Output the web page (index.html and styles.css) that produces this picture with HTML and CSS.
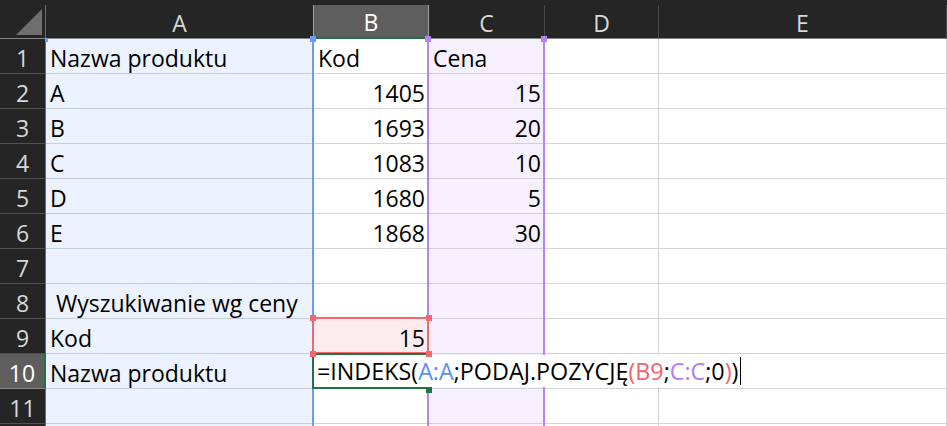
FILE: index.html
```html
<!DOCTYPE html>
<html lang="pl">
<head>
<meta charset="utf-8">
<title>Arkusz</title>
<link rel="stylesheet" href="styles.css">
</head>
<body>
<div class="topstrip"></div>
<div class="wrap">
  <div class="sheet">
    <div class="hd corner"><svg class="tri" width="46" height="33" viewBox="0 0 46 33"><polygon points="16,30 42,30 42,4" fill="#6f6f6f"/></svg></div>
    <div class="hd">A</div>
    <div class="hd sel-col">B</div>
    <div class="hd">C</div>
    <div class="hd">D</div>
    <div class="hd">E</div>

    <div class="rh">1</div><div class="c ca">Nazwa produktu</div><div class="c">Kod</div><div class="c cc">Cena</div><div class="c"></div><div class="c"></div>
    <div class="rh">2</div><div class="c ca">A</div><div class="c num">1405</div><div class="c cc num">15</div><div class="c"></div><div class="c"></div>
    <div class="rh">3</div><div class="c ca">B</div><div class="c num">1693</div><div class="c cc num">20</div><div class="c"></div><div class="c"></div>
    <div class="rh">4</div><div class="c ca">C</div><div class="c num">1083</div><div class="c cc num">10</div><div class="c"></div><div class="c"></div>
    <div class="rh">5</div><div class="c ca">D</div><div class="c num">1680</div><div class="c cc num">5</div><div class="c"></div><div class="c"></div>
    <div class="rh">6</div><div class="c ca">E</div><div class="c num">1868</div><div class="c cc num">30</div><div class="c"></div><div class="c"></div>
    <div class="rh">7</div><div class="c ca"></div><div class="c"></div><div class="c cc"></div><div class="c"></div><div class="c"></div>
    <div class="rh">8</div><div class="c ca"> Wyszukiwanie wg ceny</div><div class="c"></div><div class="c cc"></div><div class="c"></div><div class="c"></div>
    <div class="rh">9</div><div class="c ca">Kod</div><div class="c num cb">15</div><div class="c cc"></div><div class="c"></div><div class="c"></div>
    <div class="rh sel-row">10</div><div class="c ca">Nazwa produktu</div><div class="c"></div><div class="c cc"></div><div class="c"></div><div class="c"></div>
    <div class="rh">11</div><div class="c ca"></div><div class="c"></div><div class="c cc"></div><div class="c"></div><div class="c"></div>
    <div class="rh"></div><div class="c ca"></div><div class="c"></div><div class="c cc"></div><div class="c"></div><div class="c"></div>
  </div>

  <div class="rng rng-blue-line"></div>
  <div class="hnd hnd-blue-l"></div>
  <div class="hnd hnd-blue-r"></div>
  <div class="rng rng-purple-l"></div>
  <div class="rng rng-purple-r"></div>
  <div class="hnd hnd-purple-l"></div>
  <div class="hnd hnd-purple-r"></div>

  <div class="redbox"></div>
  <div class="greenbox"></div>

  <div class="editbox"><span class="k">=INDEKS(</span><span class="rb">A:A</span><span class="k">;PODAJ.POZYCJĘ</span><span class="rr">(B9</span><span class="k">;</span><span class="rp">C:C</span><span class="k">;0</span><span class="rr">)</span><span class="k">)</span><span class="caret"></span></div>

  <div class="hnd red-tl"></div>
  <div class="hnd red-tr"></div>
  <div class="hnd green-br"></div>
  <div class="hnd red-bl"></div>
  <div class="hnd red-br"></div>
</div>
</body>
</html>
```

FILE: styles.css
```css
html, body {
  margin: 0;
  padding: 0;
  background: #ffffff;
  overflow: hidden;
  width: 947px;
  height: 426px;
}

.topstrip {
  height: 5px;
  background: #252525;
}

.wrap {
  position: relative;
  height: 421px;
  overflow: hidden;
}

.sheet {
  display: grid;
  grid-template-columns: 46px 268px 115px 116px 114px 288px;
  grid-template-rows: 34px;
  grid-auto-rows: 35px;
  font-family: "Open Sans", "Noto Sans", sans-serif;
  font-size: 23px;
  line-height: 30px;
}

.sheet > div {
  box-sizing: border-box;
  display: flex;
  align-items: flex-end;
  white-space: pre;
  overflow: hidden;
}

.hd {
  background: #252525;
  color: #d8d8d8;
  border-right: 1px solid #4a4a4a;
  border-bottom: 1px solid #858585;
  justify-content: center;
}

.corner {
  position: relative;
  border-right: 1px solid #6a6a6a;
}

.tri {
  position: absolute;
  left: 0;
  top: 0;
}

.sel-col {
  background: #5e5e5e;
  color: #ffffff;
  border-left: 1px solid #a0a0a0;
  border-right: 1px solid #a0a0a0;
  border-bottom: 2px solid #217346;
  margin-left: -1px;
}

.rh {
  background: #252525;
  color: #d8d8d8;
  border-right: 1px solid #6a6a6a;
  border-bottom: 1px solid #505050;
  justify-content: center;
}

.sel-row {
  background: #5e5e5e;
  color: #ffffff;
  border-right: 2px solid #217346;
  border-bottom: 1px solid #8a8a8a;
}

.c {
  color: #000000;
  border-right: 1px solid #d4d4d4;
  border-bottom: 1px solid #d4d4d4;
  padding: 0 3px 0 4px;
}

.ca {
  background: #ecf3fe;
  border-bottom-color: #c6cedc;
}

.cc {
  background: #f6f0fe;
  border-bottom-color: #d6cde3;
}

.cb {
  background: #fdeced;
}

.num {
  justify-content: flex-end;
}

/* range reference borders */
.rng {
  position: absolute;
  top: 34px;
  width: 2px;
  height: 387px;
}

.rng-blue-line {
  left: 312px;
  background: #6a9cf5;
}

.rng-purple-l {
  left: 427px;
  background: #b683f5;
}

.rng-purple-r {
  left: 543px;
  background: #b683f5;
}

.hnd {
  position: absolute;
  width: 6px;
  height: 6px;
}

.hnd-blue-l {
  left: 45px;
  top: 33px;
  width: 3px;
  height: 4px;
  background: #6a9cf5;
}

.hnd-blue-r {
  left: 310px;
  top: 31px;
  background: #6a9cf5;
}

.hnd-purple-l {
  left: 425px;
  top: 31px;
  background: #b683f5;
}

.hnd-purple-r {
  left: 541px;
  top: 31px;
  background: #b683f5;
}

.redbox {
  position: absolute;
  left: 312px;
  top: 312px;
  width: 117px;
  height: 37px;
  box-sizing: border-box;
  border: 2px solid #f2686e;
}

.red-tl { left: 310px; top: 310px; background: #f2686e; }
.red-tr { left: 426px; top: 310px; background: #f2686e; }
.red-bl { left: 310px; top: 346px; background: #f2686e; }
.red-br { left: 426px; top: 346px; background: #f2686e; }

.greenbox {
  position: absolute;
  left: 312px;
  top: 348px;
  width: 117px;
  height: 36px;
  box-sizing: border-box;
  border: 2px solid #217346;
}

.green-br {
  left: 426px;
  top: 382px;
  background: #217346;
}

.editbox {
  position: absolute;
  left: 314px;
  top: 350px;
  width: 436px;
  height: 32px;
  background: #ffffff;
  box-sizing: border-box;
  padding: 0 0 1px 3px;
  display: flex;
  align-items: flex-end;
  font-family: "Open Sans", "Noto Sans", sans-serif;
  font-size: 23.3px;
  line-height: 30px;
  white-space: pre;
  color: #000000;
}

.k { color: #000000; }
.rb { color: #5592f3; }
.rr { color: #f0646b; }
.rp { color: #b17ef3; }

.caret {
  display: inline-block;
  width: 0;
  height: 28px;
  border-left: 1px solid #000000;
  margin-left: 2px;
  margin-bottom: 1px;
  align-self: flex-end;
}
```
